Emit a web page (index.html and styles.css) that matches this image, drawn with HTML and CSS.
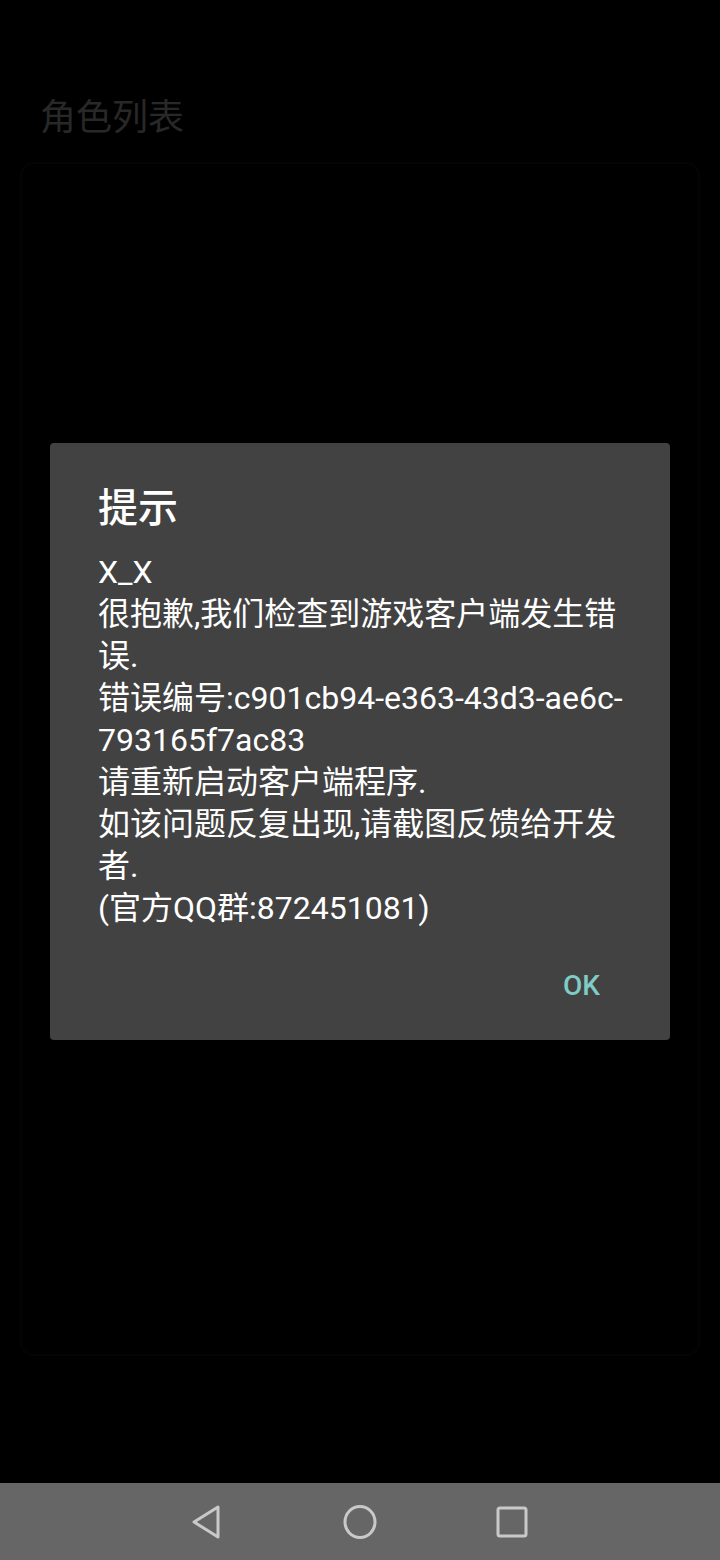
FILE: index.html
```html
<!DOCTYPE html>
<html lang="zh-CN">
<head>
<meta charset="UTF-8" />
<meta name="viewport" content="width=device-width, initial-scale=1" />
<title>角色列表</title>
<link rel="stylesheet" href="styles.css">
</head>
<body>
  <div class="screen">
    <div class="page">
      <h1 class="page-title">角色列表</h1>
      <div class="page-card"></div>
    </div>

    <div class="overlay">
      <div class="dialog">
        <h2 class="dialog-title">提示</h2>
        <p class="dialog-message">X_X
很抱歉,我们检查到游戏客户端发生错误.
错误编号:c901cb94-e363-43d3-ae6c-793165f7ac83
请重新启动客户端程序.
如该问题反复出现,请截图反馈给开发者.
(官方QQ群:872451081)</p>
        <div class="dialog-actions">
          <button type="button" class="dialog-button">OK</button>
        </div>
      </div>
    </div>
  </div>

  <nav class="navbar">
    <svg class="nav-icon" width="40" height="40" viewBox="0 0 40 40">
      <path d="M30 5 L30 35 L6 20 Z" fill="none" stroke="#c9c9c9" stroke-width="3" stroke-linejoin="round"/>
    </svg>
    <svg class="nav-icon" width="40" height="40" viewBox="0 0 40 40">
      <ellipse cx="20" cy="20" rx="15" ry="15.5" fill="none" stroke="#c9c9c9" stroke-width="3"/>
    </svg>
    <svg class="nav-icon" width="40" height="40" viewBox="0 0 40 40">
      <rect x="6" y="6" width="28" height="28" rx="2" fill="none" stroke="#c9c9c9" stroke-width="3"/>
    </svg>
  </nav>
</body>
</html>
```

FILE: styles.css
```css
html, body {
  margin: 0;
  padding: 0;
}
body {
  width: 720px;
  height: 1560px;
  background: #000000;
  font-family: Roboto, "Noto Sans CJK SC", sans-serif;
  display: flex;
  flex-direction: column;
  overflow: hidden;
}
.screen {
  position: relative;
  flex: 1;
}
.page {
  padding: 88px 20px 0;
}
.page-title {
  margin: 0 0 0 20px;
  font-size: 36px;
  font-weight: 400;
  line-height: 60px;
  color: #282828;
}
.page-card {
  margin-top: 14px;
  height: 1190px;
  border: 2px solid #040404;
  border-radius: 14px;
}
.overlay {
  position: absolute;
  inset: 0;
  display: flex;
  align-items: center;
  justify-content: center;
}
.dialog {
  width: 620px;
  box-sizing: border-box;
  background: #424242;
  border-radius: 4px;
  padding: 38px 44px 0 48px;
}
.dialog-title {
  margin: 0;
  font-size: 40px;
  font-weight: 500;
  line-height: 56px;
  color: #ffffff;
}
.dialog-message {
  margin: 14px 0 0;
  font-size: 32px;
  line-height: 42px;
  color: #ffffff;
  white-space: pre-line;
}
.dialog-actions {
  display: flex;
  justify-content: flex-end;
  padding: 29px 0 26px;
  margin-right: -6px;
}
.dialog-button {
  background: none;
  border: none;
  padding: 10px 32px;
  font-family: Roboto, sans-serif;
  font-size: 28px;
  font-weight: 500;
  line-height: 36px;
  color: #80cbc4;
  cursor: pointer;
}
.navbar {
  height: 77px;
  background: #666666;
  display: flex;
  align-items: center;
  justify-content: center;
  gap: 112px;
}
.nav-icon {
  display: block;
}
```
